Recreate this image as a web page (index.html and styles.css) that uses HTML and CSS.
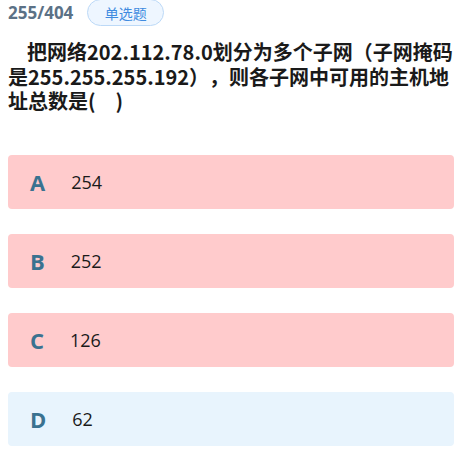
FILE: index.html
```
<!DOCTYPE html>
<html lang="zh">
<head>
<meta charset="utf-8">
<link rel="stylesheet" href="styles.css">
</head>
<body>
<div class="page">
  <div class="head">
    <span class="count">255/404</span>
    <span class="badge">单选题</span>
  </div>
  <div class="question">把网络202.112.78.0划分为多个子网（子网掩码是255.255.255.192），则各子网中可用的主机地址总数是(　)</div>
  <div class="options">
    <div class="opt wrong"><span class="letter">A</span><span class="val">254</span></div>
    <div class="opt wrong"><span class="letter">B</span><span class="val">252</span></div>
    <div class="opt wrong"><span class="letter">C</span><span class="val">126</span></div>
    <div class="opt plain"><span class="letter">D</span><span class="val">62</span></div>
  </div>
</div>
</body>
</html>
```
FILE: styles.css
```
html, body {
  margin: 0;
  padding: 0;
  background: #ffffff;
}
.page {
  padding: 0 8px;
  font-family: "Noto Sans CJK SC", "Noto Sans", sans-serif;
}
.head {
  display: flex;
  align-items: center;
  gap: 14px;
  height: 27px;
  margin-top: -1px;
}
.count {
  font-family: "Open Sans", "Noto Sans", sans-serif;
  font-weight: 700;
  font-size: 17px;
  color: #5b7186;
}
.badge {
  display: inline-flex;
  align-items: center;
  justify-content: center;
  width: 75px;
  height: 25px;
  border: 1px solid #bcd9f7;
  border-radius: 14px;
  background: #eef6ff;
  color: #3f8be0;
  font-size: 14px;
}
.question {
  margin-top: 14px;
  font-size: 20px;
  line-height: 24.5px;
  font-weight: 700;
  color: #1a1a1a;
  text-indent: 19px;
  text-spacing-trim: space-all;
}
.options {
  margin-top: 41px;
  display: flex;
  flex-direction: column;
  gap: 25px;
}
.opt {
  height: 54px;
  border-radius: 4px;
  display: flex;
  align-items: center;
  padding-left: 22px;
  gap: 26px;
}
.wrong {
  background: #ffcbcc;
}
.plain {
  background: #e8f4fd;
}
.letter {
  font-family: "Open Sans", "Noto Sans", sans-serif;
  font-weight: 700;
  font-size: 22px;
  color: #3a7290;
}
.val {
  font-family: "Open Sans", "Noto Sans", sans-serif;
  font-size: 18px;
  color: #1a1a1a;
}
```
